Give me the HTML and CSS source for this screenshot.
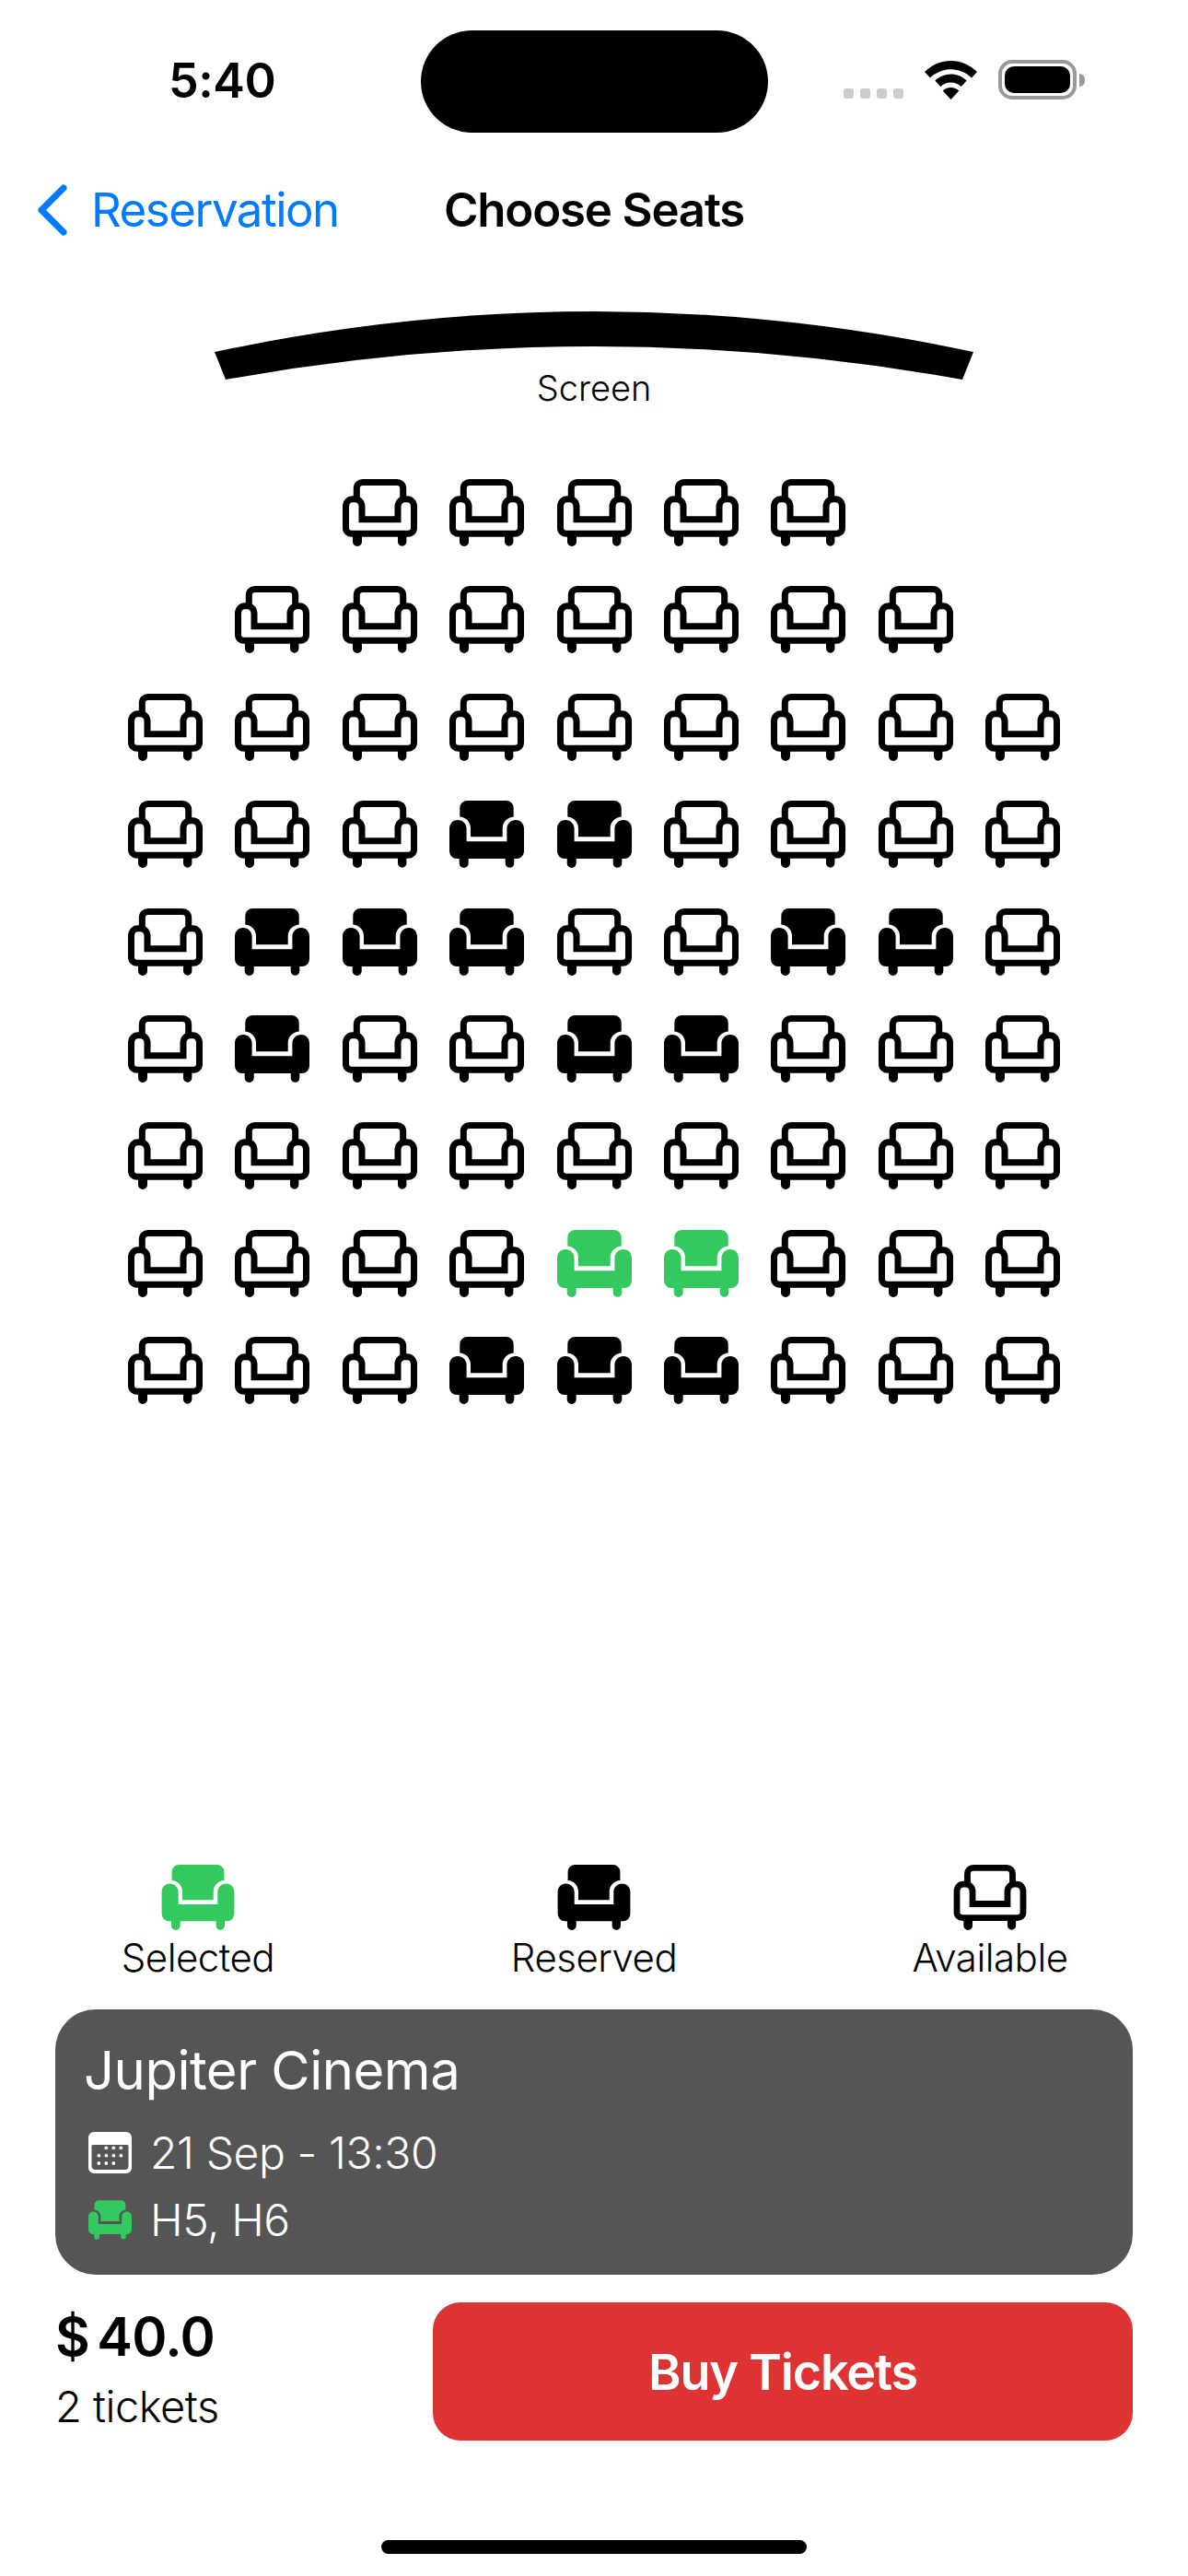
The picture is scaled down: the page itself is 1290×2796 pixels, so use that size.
FILE: index.html
```html
<!DOCTYPE html>
<html lang="en">
<head>
<meta charset="utf-8">
<title>Choose Seats</title>
<link rel="stylesheet" href="styles.css">
</head>
<body>
<svg class="sprite" aria-hidden="true">
  <symbol id="seat-filled" viewBox="0 0 81 73">
    <path d="M11.3 8a8 8 0 0 1 8-8h42.4a8 8 0 0 1 8 8v9.6C63 18 57.7 23.5 57.7 30v9.3H23V30c0-6.500-5-12-11.700-12.400z"/>
    <path d="M9 21c5.400 0 9.600 4.200 9.600 9.500v13.800h43.800V30.500c0-5.300 4.200-9.500 9.600-9.500s9 4.200 9 9.500V55a8 8 0 0 1-8 8h-2.700v5a4.800 4.800 0 0 1-9.600 0v-5H20.700v5a5 5 0 0 1-10 0v-5H8a8 8 0 0 1-8-8V30.500C0 25.200 3.600 21 9 21z"/>
  </symbol>
  <symbol id="seat-open" viewBox="0 0 81 73">
    <path class="seat-line" d="M15.300 21V10c0-4 2.700-6.500 6.700-6.500h37c4 0 6.700 2.500 6.700 6.500v11"/>
    <path class="seat-line" d="M21 43.700h39V30c0-5 3.500-8.300 8-8.300h2c4.500 0 7.500 3.300 7.500 8.300v23c0 4-3 6.300-6.500 6.300H10c-3.500 0-6.500-2.300-6.500-6.300V30c0-5 3-8.300 7.500-8.300h2c4.500 0 8 3.300 8 8.300z"/>
    <path d="M11 62h10v6a5 5 0 0 1-10 0zM60 62h9.400v6a4.700 4.700 0 0 1-9.400 0z"/>
  </symbol>
</svg>

<main class="page">
  <header class="status">
    <div class="status-time">5:40</div>
    <div class="island"></div>
    <div class="status-icons">
      <div class="signal"><i></i><i></i><i></i><i></i></div>
      <svg class="wifi" viewBox="0 0 57 42"><path d="M28.500 0C39.500 0 49.300 4.500 57 12l-6 6.500C45 12.800 37.200 9.300 28.500 9.300S12 12.800 6 18.500L0 12C7.700 4.500 17.500 0 28.500 0z"/><path d="M28.500 14.500c6.600 0 12.500 2.600 17.200 7l-6 6.400c-3-2.800-6.900-4.500-11.200-4.500s-8.200 1.700-11.200 4.500l-6-6.400c4.700-4.400 10.600-7 17.200-7z"/><path d="M28.500 29c3.400 0 6.500 1.300 8.800 3.400L28.500 42l-8.800-9.600c2.300-2.100 5.400-3.400 8.800-3.400z"/></svg>
      <div class="battery"><div class="battery-shell"><div class="battery-level"></div></div><div class="battery-cap"></div></div>
    </div>
  </header>

  <nav class="nav">
    <div class="back">
      <svg class="chevron" viewBox="0 0 35 56"><path d="M30 4 6 28l24 24"/></svg>
      <span>Reservation</span>
    </div>
    <h1 class="title">Choose Seats</h1>
    <div></div>
  </nav>

  <section class="screen">
    <svg class="screen-arc" viewBox="233 338 824 74"><path d="M233 382Q645 294 1057 382L1045 412Q645 340 245 412Z"/></svg>
    <div class="screen-label">Screen</div>
  </section>

  <section class="seats">
    <div class="row">
      <svg class="seat"><use href="#seat-open"/></svg><svg class="seat"><use href="#seat-open"/></svg><svg class="seat"><use href="#seat-open"/></svg><svg class="seat"><use href="#seat-open"/></svg><svg class="seat"><use href="#seat-open"/></svg>
    </div>
    <div class="row">
      <svg class="seat"><use href="#seat-open"/></svg><svg class="seat"><use href="#seat-open"/></svg><svg class="seat"><use href="#seat-open"/></svg><svg class="seat"><use href="#seat-open"/></svg><svg class="seat"><use href="#seat-open"/></svg><svg class="seat"><use href="#seat-open"/></svg><svg class="seat"><use href="#seat-open"/></svg>
    </div>
    <div class="row">
      <svg class="seat"><use href="#seat-open"/></svg><svg class="seat"><use href="#seat-open"/></svg><svg class="seat"><use href="#seat-open"/></svg><svg class="seat"><use href="#seat-open"/></svg><svg class="seat"><use href="#seat-open"/></svg><svg class="seat"><use href="#seat-open"/></svg><svg class="seat"><use href="#seat-open"/></svg><svg class="seat"><use href="#seat-open"/></svg><svg class="seat"><use href="#seat-open"/></svg>
    </div>
    <div class="row">
      <svg class="seat"><use href="#seat-open"/></svg><svg class="seat"><use href="#seat-open"/></svg><svg class="seat"><use href="#seat-open"/></svg><svg class="seat"><use href="#seat-filled"/></svg><svg class="seat"><use href="#seat-filled"/></svg><svg class="seat"><use href="#seat-open"/></svg><svg class="seat"><use href="#seat-open"/></svg><svg class="seat"><use href="#seat-open"/></svg><svg class="seat"><use href="#seat-open"/></svg>
    </div>
    <div class="row">
      <svg class="seat"><use href="#seat-open"/></svg><svg class="seat"><use href="#seat-filled"/></svg><svg class="seat"><use href="#seat-filled"/></svg><svg class="seat"><use href="#seat-filled"/></svg><svg class="seat"><use href="#seat-open"/></svg><svg class="seat"><use href="#seat-open"/></svg><svg class="seat"><use href="#seat-filled"/></svg><svg class="seat"><use href="#seat-filled"/></svg><svg class="seat"><use href="#seat-open"/></svg>
    </div>
    <div class="row">
      <svg class="seat"><use href="#seat-open"/></svg><svg class="seat"><use href="#seat-filled"/></svg><svg class="seat"><use href="#seat-open"/></svg><svg class="seat"><use href="#seat-open"/></svg><svg class="seat"><use href="#seat-filled"/></svg><svg class="seat"><use href="#seat-filled"/></svg><svg class="seat"><use href="#seat-open"/></svg><svg class="seat"><use href="#seat-open"/></svg><svg class="seat"><use href="#seat-open"/></svg>
    </div>
    <div class="row">
      <svg class="seat"><use href="#seat-open"/></svg><svg class="seat"><use href="#seat-open"/></svg><svg class="seat"><use href="#seat-open"/></svg><svg class="seat"><use href="#seat-open"/></svg><svg class="seat"><use href="#seat-open"/></svg><svg class="seat"><use href="#seat-open"/></svg><svg class="seat"><use href="#seat-open"/></svg><svg class="seat"><use href="#seat-open"/></svg><svg class="seat"><use href="#seat-open"/></svg>
    </div>
    <div class="row">
      <svg class="seat"><use href="#seat-open"/></svg><svg class="seat"><use href="#seat-open"/></svg><svg class="seat"><use href="#seat-open"/></svg><svg class="seat"><use href="#seat-open"/></svg><svg class="seat green"><use href="#seat-filled"/></svg><svg class="seat green"><use href="#seat-filled"/></svg><svg class="seat"><use href="#seat-open"/></svg><svg class="seat"><use href="#seat-open"/></svg><svg class="seat"><use href="#seat-open"/></svg>
    </div>
    <div class="row">
      <svg class="seat"><use href="#seat-open"/></svg><svg class="seat"><use href="#seat-open"/></svg><svg class="seat"><use href="#seat-open"/></svg><svg class="seat"><use href="#seat-filled"/></svg><svg class="seat"><use href="#seat-filled"/></svg><svg class="seat"><use href="#seat-filled"/></svg><svg class="seat"><use href="#seat-open"/></svg><svg class="seat"><use href="#seat-open"/></svg><svg class="seat"><use href="#seat-open"/></svg>
    </div>
  </section>

  <section class="bottom">
    <div class="legend">
      <div class="legend-item"><svg class="legend-seat green"><use href="#seat-filled"/></svg><span>Selected</span></div>
      <div class="legend-item"><svg class="legend-seat"><use href="#seat-filled"/></svg><span>Reserved</span></div>
      <div class="legend-item"><svg class="legend-seat"><use href="#seat-open"/></svg><span>Available</span></div>
    </div>

    <div class="card">
      <div class="card-title">Jupiter Cinema</div>
      <div class="card-line">
        <svg class="card-icon" viewBox="0 0 47 45">
          <path fill-rule="evenodd" d="M6 0h35a6 6 0 0 1 6 6v33a6 6 0 0 1-6 6H6a6 6 0 0 1-6-6V6a6 6 0 0 1 6-6zm-1.500 14a2 2 0 0 0-1 1v22a4 4 0 0 0 4 4h32a4 4 0 0 0 4-4V15a2 2 0 0 0-1-1z"/>
          <circle cx="19.300" cy="17.300" r="1.900"/><circle cx="27.300" cy="17.300" r="1.900"/><circle cx="35.300" cy="17.300" r="1.900"/>
          <circle cx="11.300" cy="25.700" r="1.900"/><circle cx="19.300" cy="25.700" r="1.900"/><circle cx="27.300" cy="25.700" r="1.900"/><circle cx="35.300" cy="25.700" r="1.900"/>
          <circle cx="11.300" cy="34" r="1.900"/><circle cx="19.300" cy="34" r="1.900"/><circle cx="27.300" cy="34" r="1.900"/>
        </svg>
        <span>21 Sep - 13:30</span>
      </div>
      <div class="card-line">
        <svg class="card-seat green"><use href="#seat-filled"/></svg>
        <span>H5, H6</span>
      </div>
    </div>

    <div class="checkout">
      <div class="price">
        <div class="price-value">$ 40.0</div>
        <div class="price-count">2 tickets</div>
      </div>
      <button class="buy" type="button">Buy Tickets</button>
    </div>

    <div class="home-bar"></div>
  </section>
</main>
</body>
</html>
```
FILE: styles.css
```css
* { box-sizing: border-box; }
html, body { margin: 0; padding: 0; background: #fff; }
body { font-family: Inter, "Liberation Sans", sans-serif; color: #000; }
.sprite { display: none; }
.seat-line { fill: none; stroke: currentColor; stroke-width: 7; }
.page { width: 1290px; height: 2796px; display: flex; flex-direction: column; overflow: hidden; }

.status { height: 170px; padding-top: 33px; display: grid; grid-template-columns: 457px 377px 1fr; align-items: start; }
.status-time { padding-left: 183px; margin-top: 24px; font-size: 52px; line-height: 62px; font-weight: 600; letter-spacing: -0.5px; }
.island { height: 111px; border-radius: 56px; background: #000; }
.status-icons { display: flex; align-items: flex-end; padding: 32px 0 0 82px; }
.signal { display: flex; gap: 7px; margin-bottom: 1px; }
.signal i { width: 11px; height: 11px; border-radius: 3px; background: #ccc; }
.wifi { width: 57px; height: 42px; margin-left: 23px; fill: #000; display: block; }
.battery { display: flex; align-items: center; margin-left: 23px; }
.battery-shell { width: 85px; height: 43px; border: 4px solid #999; border-radius: 15px; padding: 3px; }
.battery-level { width: 100%; height: 100%; background: #000; border-radius: 10px; }
.battery-cap { width: 6px; height: 14px; margin-left: 3px; background: #999; border-radius: 0 7px 7px 0; }

.nav { height: 115px; display: grid; grid-template-columns: 1fr auto 1fr; align-items: center; }
.back { display: flex; align-items: center; gap: 25px; padding-left: 39px; color: #007aff; font-size: 51px; line-height: 62px; letter-spacing: -1.5px; }
.chevron { width: 35px; height: 56px; display: block; }
.chevron path { fill: none; stroke: #007aff; stroke-width: 7; stroke-linecap: round; stroke-linejoin: round; }
.title { margin: 0; font-size: 51px; line-height: 62px; font-weight: 600; letter-spacing: -1.2px; }

.screen { padding-top: 53px; display: flex; flex-direction: column; align-items: center; }
.screen-arc { width: 824px; height: 74px; display: block; fill: #000; }
.screen-label { margin-top: -13px; font-size: 38px; line-height: 44px; font-weight: 300; }

.seats { margin-top: 77px; display: flex; flex-direction: column; gap: 43.4px; }
.row { display: flex; justify-content: center; gap: 35.4px; }
.seat { width: 81px; height: 73px; display: block; color: #000; fill: currentColor; }
.green { color: #34c95e; fill: currentColor; }

.bottom { margin-top: auto; padding: 0 60px 24px; display: flex; flex-direction: column; }
.legend { margin: 0 -60px; display: grid; grid-template-columns: repeat(3, 1fr); }
.legend-item { display: flex; flex-direction: column; align-items: center; font-size: 42px; line-height: 50px; font-weight: 300; letter-spacing: -0.5px; }
.legend-seat { width: 80px; height: 71px; display: block; margin-bottom: 5px; fill: currentColor; }

.card { margin-top: 31px; height: 288px; padding: 31px 32px 0 36px; border-radius: 44px; background: #555; color: #fff; }
.card-title { margin-left: -5px; font-size: 58px; line-height: 70px; font-weight: 400; letter-spacing: -0.5px; }
.card-line { display: flex; align-items: center; gap: 20px; height: 73px; font-size: 48px; line-height: 58px; font-weight: 300; letter-spacing: -0.4px; }
.card-title + .card-line { margin-top: 18px; }
.card-icon { width: 47px; height: 45px; display: block; fill: #fff; }
.card-seat { width: 47px; height: 43px; display: block; }

.checkout { margin-top: 30px; display: flex; justify-content: space-between; align-items: stretch; }
.price-value { margin-top: 2px; font-size: 58px; line-height: 70px; font-weight: 600; letter-spacing: -0.6px; word-spacing: -6px; }
.price-count { margin-top: 13px; font-size: 47px; line-height: 56px; font-weight: 300; letter-spacing: -0.5px; }
.buy { width: 760px; height: 150px; border: 0; border-radius: 30px; background: #de3333; color: #fff; font-family: inherit; font-size: 54px; font-weight: 600; letter-spacing: -1.2px; padding: 0; }

.home-bar { align-self: center; margin-top: 108px; width: 462px; height: 15px; border-radius: 8px; background: #000; }
```
